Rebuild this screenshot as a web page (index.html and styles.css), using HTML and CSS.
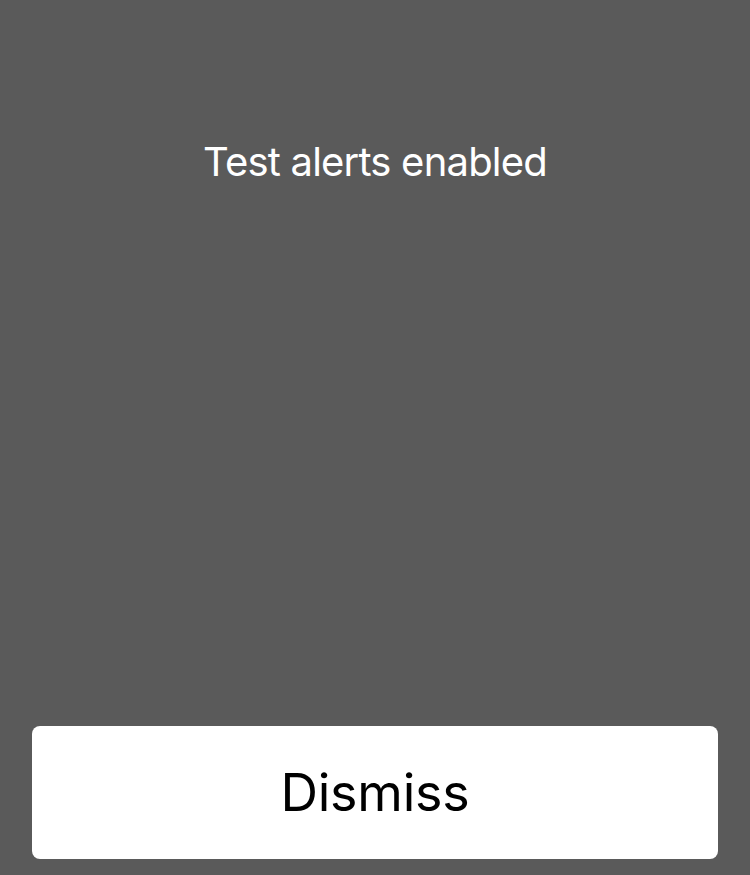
FILE: index.html
```html
<!DOCTYPE html>
<html lang="en">
<head>
  <meta charset="UTF-8" />
  <meta name="viewport" content="width=device-width, initial-scale=1.0" />
  <title>Test alerts</title>
  <link rel="stylesheet" href="styles.css">
</head>
<body>

  <div class="alert-screen">
    <p class="alert-title">Test alerts enabled</p>
    <button type="button" class="dismiss-btn">Dismiss</button>
  </div>

</body>
</html>
```

FILE: styles.css
```css
* {
  margin: 0;
  padding: 0;
  box-sizing: border-box;
  font-family: "Inter", "Roboto", "Liberation Sans", sans-serif;
}

body {
  background: #5a5a5a;
}

.alert-screen {
  display: flex;
  flex-direction: column;
  align-items: center;
  justify-content: space-between;
  height: 875px;
  padding: 135px 32px 16px;
}

.alert-title {
  color: #fff;
  font-size: 40px;
  line-height: 54px;
  letter-spacing: -0.8px;
  text-align: center;
}

.dismiss-btn {
  width: 100%;
  height: 133px;
  border: none;
  border-radius: 8px;
  background: #fff;
  color: #000;
  font-size: 52px;
  letter-spacing: -0.2px;
  cursor: pointer;
}
```
